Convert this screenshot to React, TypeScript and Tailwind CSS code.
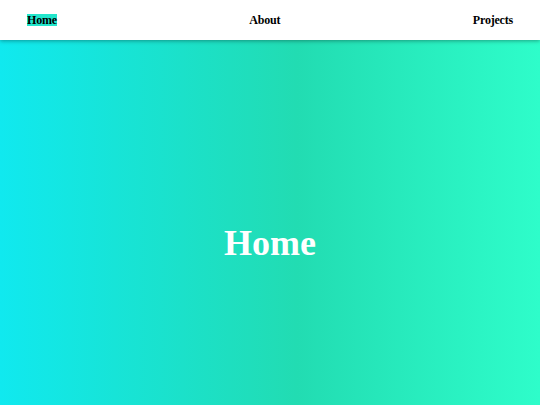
import React from 'react';

const links = ['Home', 'About', 'Projects'];

export default function App() {
  return (
    <div className="flex h-screen w-full flex-col font-['Liberation_Serif',serif]">
      <nav className="relative z-10 flex h-10 shrink-0 items-center justify-between bg-white px-[27px] shadow-[0_1px_4px_rgba(0,0,0,0.35)]">
        {links.map((l, i) => (
          <a
            key={l}
            href="#"
            className={`text-[12px] font-bold leading-[12px] tracking-[-0.2px] text-black ${i === 0 ? 'bg-[#22e6cc]' : ''}`}
          >
            {l}
          </a>
        ))}
      </nav>
      <main className="flex flex-1 items-center justify-center bg-[linear-gradient(to_right,#10e9ef,#22dcb2_55%,#2efdca)] pt-10">
        <h1 className="text-[36px] font-bold text-white">Home</h1>
      </main>
    </div>
  );
}
